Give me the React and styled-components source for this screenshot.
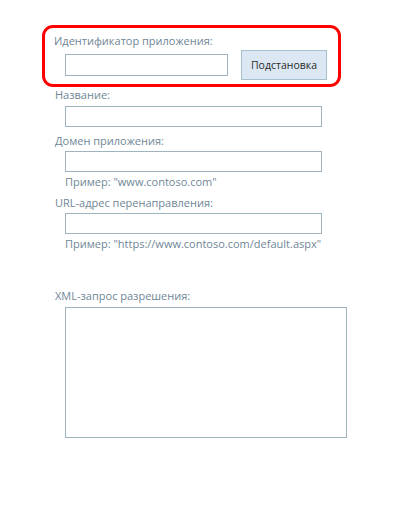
import React from "react";
import styled, { createGlobalStyle } from "styled-components";

const GlobalStyle = createGlobalStyle`
  html, body {
    margin: 0;
    padding: 0;
    background: #ffffff;
  }
  body {
    font-family: "Open Sans", "Noto Sans", sans-serif;
  }
`;

const Page = styled.div`
  width: 415px;
  height: 508px;
  box-sizing: border-box;
  padding: 25px 0 0 42px;
  display: flex;
  flex-direction: column;
`;

const Highlight = styled.div`
  width: 299px;
  height: 62px;
  box-sizing: border-box;
  border: 3px solid #ff0000;
  border-radius: 11px;
  padding: 5px 0 0 9px;
  display: flex;
  flex-direction: column;
`;

const Label = styled.label`
  display: block;
  font-size: 11px;
  line-height: 16px;
  color: #6f8696;
  margin-left: ${(p) => p.$indent ?? 13}px;
  margin-top: ${(p) => p.$top ?? 0}px;
  white-space: nowrap;
`;

const Hint = styled.div`
  font-size: 11px;
  line-height: 16px;
  color: #6f8696;
  margin-left: 23px;
  margin-top: 2px;
  white-space: nowrap;
`;

const Row = styled.div`
  display: flex;
  align-items: center;
  gap: 13px;
  margin-top: 1px;
  margin-left: 11px;
`;

const TextInput = styled.input`
  display: block;
  box-sizing: border-box;
  width: ${(p) => p.$w ?? 257}px;
  height: ${(p) => p.$h ?? 21}px;
  border: 1px solid #9fb2bf;
  background: #ffffff;
  margin: ${(p) => p.$m ?? "0 0 0 23px"};
  padding: 0 4px;
  outline: none;
  font-family: inherit;
`;

const TextArea = styled.textarea`
  display: block;
  box-sizing: border-box;
  width: 282px;
  height: 131px;
  border: 1px solid #9fb2bf;
  margin: 3px 0 0 23px;
  resize: none;
  outline: none;
`;

const Button = styled.button`
  box-sizing: border-box;
  width: 86px;
  height: 30px;
  border: 1px solid #a7bfd1;
  background: #dbe8f3;
  color: #2a2a2a;
  font-family: inherit;
  font-size: 10.5px;
  padding: 0;
  cursor: pointer;
`;

export default function App() {
  return (
    <>
      <GlobalStyle />
      <Page>
        <Highlight>
          <Label $indent={0} htmlFor="appId">Идентификатор приложения:</Label>
          <Row>
            <TextInput id="appId" $w={163} $h={22} $m="0" />
            <Button type="button">Подстановка</Button>
          </Row>
        </Highlight>

        <Label htmlFor="title">Название:</Label>
        <TextInput id="title" $m="3px 0 0 23px" />

        <Label htmlFor="domain" $top={6}>Домен приложения:</Label>
        <TextInput id="domain" $m="2px 0 0 23px" />
        <Hint>Пример: "www.contoso.com"</Hint>

        <Label htmlFor="redirect" $top={5}>URL-адрес перенаправления:</Label>
        <TextInput id="redirect" $m="2px 0 0 23px" />
        <Hint>Пример: "https://www.contoso.com/default.aspx"</Hint>

        <Label htmlFor="xml" $top={36}>XML-запрос разрешения:</Label>
        <TextArea id="xml" />
      </Page>
    </>
  );
}
